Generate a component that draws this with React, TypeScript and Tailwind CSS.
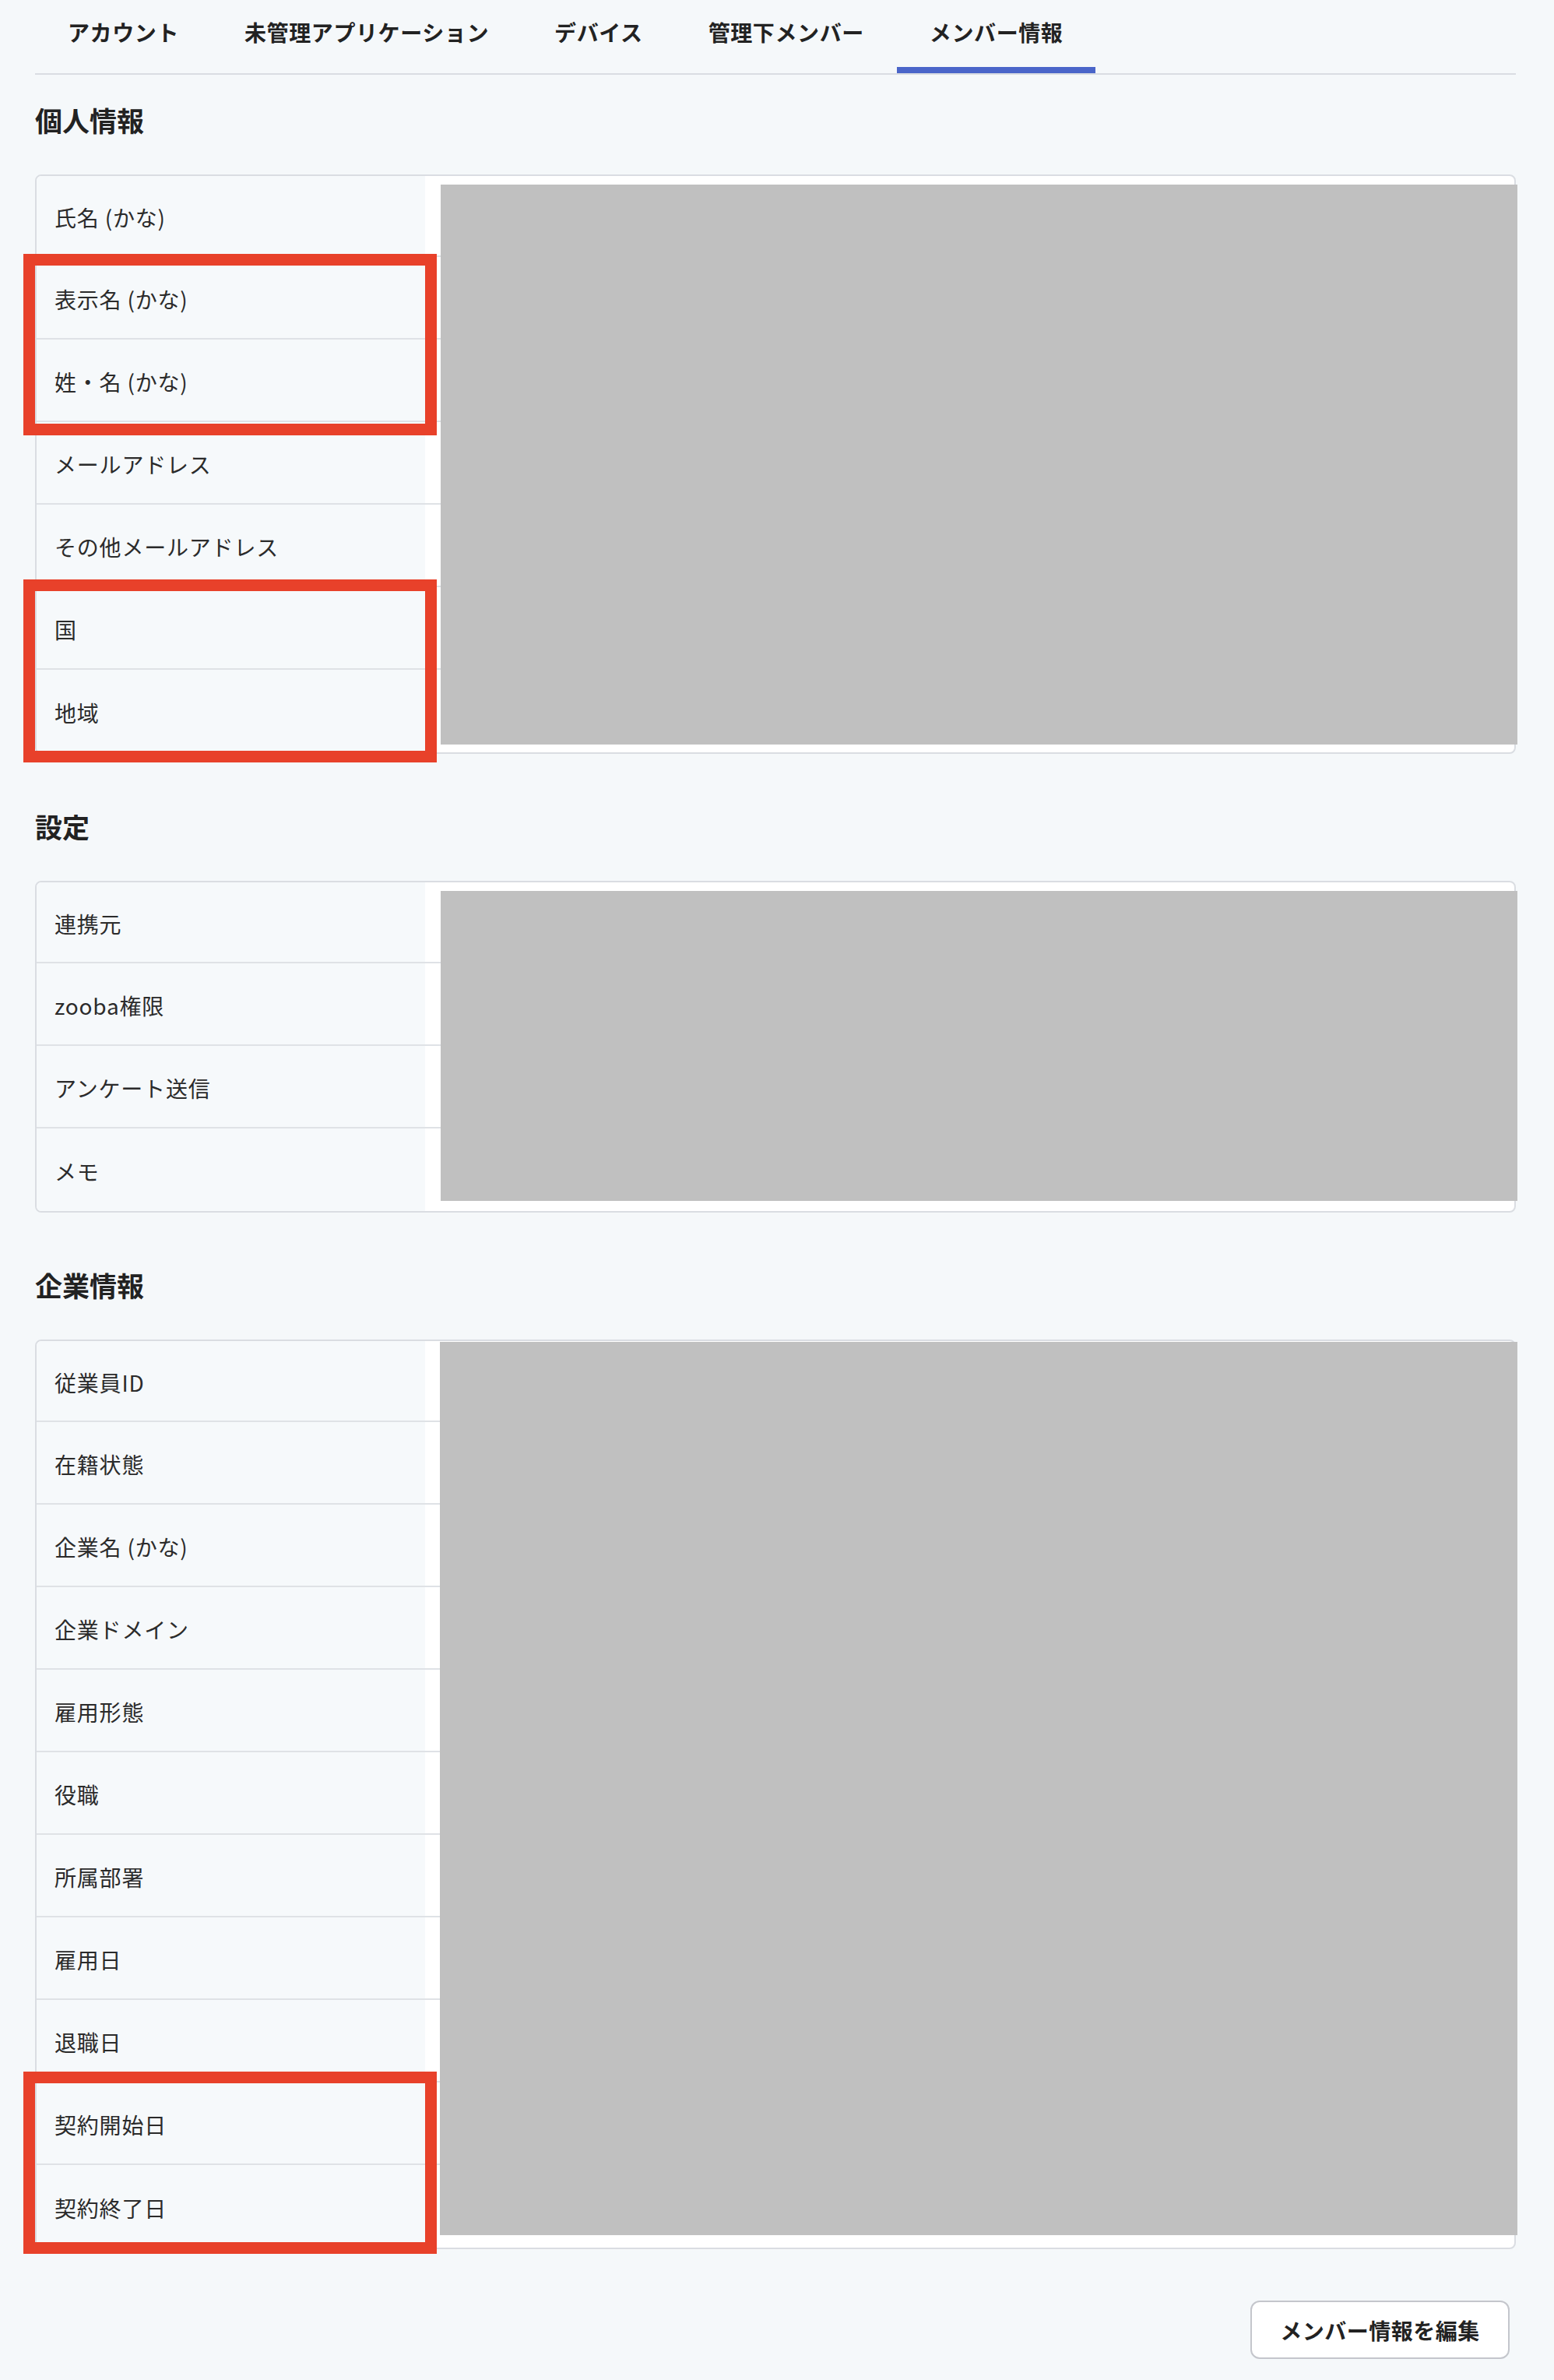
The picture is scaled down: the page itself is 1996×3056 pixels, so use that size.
import React from 'react';

interface Section {
  title: string;
  rows: string[];
  // redaction box offsets inside the table
  mask: { top: string; bottom: string; left: string };
  // highlighted row groups: [top, height] in px, relative to the table body
  marks: { top: number; height: number }[];
}

const tabs = ['アカウント', '未管理アプリケーション', 'デバイス', '管理下メンバー', 'メンバー情報'];

const sections: Section[] = [
  {
    title: '個人情報',
    rows: ['氏名 (かな)', '表示名 (かな)', '姓・名 (かな)', 'メールアドレス', 'その他メールアドレス', '国', '地域'],
    mask: { top: 'top-[11px]', bottom: 'bottom-[10px]', left: 'left-[519px]' },
    marks: [
      { top: 100, height: 233 },
      { top: 518, height: 235 },
    ],
  },
  {
    title: '設定',
    rows: ['連携元', 'zooba権限', 'アンケート送信', 'メモ'],
    mask: { top: 'top-[11px]', bottom: 'bottom-[13px]', left: 'left-[519px]' },
    marks: [],
  },
  {
    title: '企業情報',
    rows: [
      '従業員ID',
      '在籍状態',
      '企業名 (かな)',
      '企業ドメイン',
      '雇用形態',
      '役職',
      '所属部署',
      '雇用日',
      '退職日',
      '契約開始日',
      '契約終了日',
    ],
    mask: { top: 'top-[1px]', bottom: 'bottom-[16px]', left: 'left-[518px]' },
    marks: [{ top: 938, height: 234 }],
  },
];

const TabBar: React.FC = () => (
  <div className="flex border-b-2 border-[#dadde2]">
    {tabs.map((tab, i) => {
      const active = i === tabs.length - 1;
      return (
        <div key={tab} className="relative h-[94px] px-[42px] pt-[20px]">
          <span className="block text-[28px] leading-[42px] font-bold tracking-[0.6px] text-[#222222]">
            {tab}
          </span>
          {active && <div className="absolute left-0 right-0 bottom-0 h-[8px] bg-[#4a65c9]" />}
        </div>
      );
    })}
  </div>
);

const InfoTable: React.FC<{ section: Section }> = ({ section }) => (
  <div className="relative rounded-[8px] border-2 border-[#dadde2] bg-white">
    <div className="flex flex-col divide-y-2 divide-[#dfe2e6]">
      {section.rows.map((label, i) => (
        <div key={label} className="flex h-[106px] first:h-[104px]">
          <div
            className={`flex w-[499px] items-center bg-[#f6f9fb] pl-[23px] pt-[3px] text-[28px] tracking-[0.8px] text-[#2b2b2b] ${
              i === 0 ? 'rounded-tl-[6px]' : ''
            } ${i === section.rows.length - 1 ? 'rounded-bl-[6px]' : ''}`}
          >
            {label}
          </div>
          <div className="flex-1" />
        </div>
      ))}
    </div>

    {/* redacted values */}
    <div className={`absolute ${section.mask.top} ${section.mask.bottom} ${section.mask.left} -right-[4px] bg-[#c0c0c0]`} />

    {/* highlighted fields */}
    {section.marks.map((m) => (
      <div
        key={m.top}
        className="pointer-events-none absolute -left-[17px] w-[531px] border-[15px] border-[#e8412a]"
        style={{ top: m.top, height: m.height }}
      />
    ))}
  </div>
);

export default function App() {
  return (
    <div className="min-h-screen bg-[#f5f8fa] pl-[45px] pr-[49px] pb-[28px] font-['Noto_Sans_CJK_JP','Noto_Sans',sans-serif]">
      <TabBar />

      <div className="flex flex-col gap-[66px] pt-[31px]">
        {sections.map((section) => (
          <section key={section.title}>
            <h2 className="mb-[43px] text-[35px] leading-[54px] font-bold text-[#222222]">{section.title}</h2>
            <InfoTable section={section} />
          </section>
        ))}

        <div className="flex justify-end pr-[8px]">
          <button className="h-[75px] w-[333px] rounded-[12px] border-2 border-[#c4c6cc] bg-white text-[28px] font-bold tracking-[0.5px] text-[#222222]">
            メンバー情報を編集
          </button>
        </div>
      </div>
    </div>
  );
}
